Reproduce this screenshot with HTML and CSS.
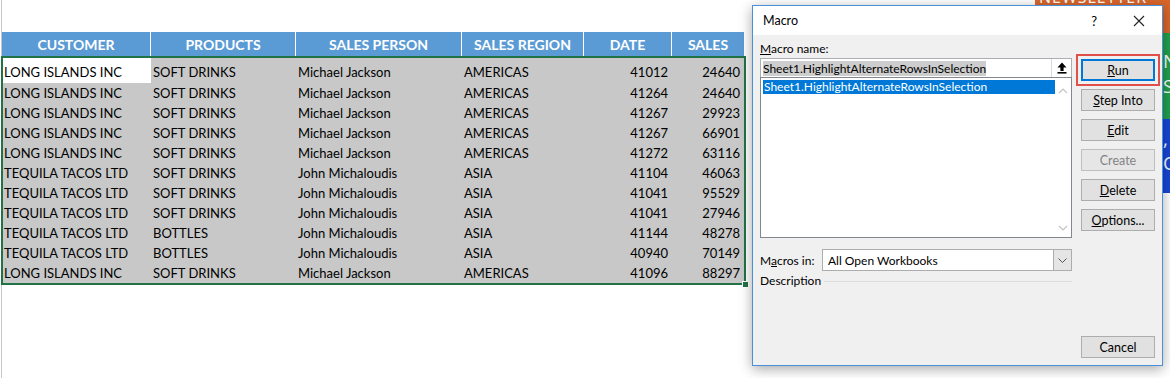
FILE: index.html
```html
<!DOCTYPE html>
<html lang="en">
<head>
    <meta charset="UTF-8">
    <meta name="viewport" content="width=device-width, initial-scale=1.0">
    <title>Macro</title>
    <link rel="stylesheet" href="styles.css">
</head>
<body>
    <!-- sheet -->
    <div class="sheet">
        <div class="head">
            <div>CUSTOMER</div>
            <div>PRODUCTS</div>
            <div>SALES PERSON</div>
            <div>SALES REGION</div>
            <div>DATE</div>
            <div>SALES</div>
        </div>
        <div class="data">
            <div class="row first"><div class="active">LONG ISLANDS INC</div><div>SOFT DRINKS</div><div>Michael Jackson</div><div>AMERICAS</div><div class="num">41012</div><div class="num">24640</div></div>
            <div class="row"><div>LONG ISLANDS INC</div><div>SOFT DRINKS</div><div>Michael Jackson</div><div>AMERICAS</div><div class="num">41264</div><div class="num">24640</div></div>
            <div class="row"><div>LONG ISLANDS INC</div><div>SOFT DRINKS</div><div>Michael Jackson</div><div>AMERICAS</div><div class="num">41267</div><div class="num">29923</div></div>
            <div class="row"><div>LONG ISLANDS INC</div><div>SOFT DRINKS</div><div>Michael Jackson</div><div>AMERICAS</div><div class="num">41267</div><div class="num">66901</div></div>
            <div class="row"><div>LONG ISLANDS INC</div><div>SOFT DRINKS</div><div>Michael Jackson</div><div>AMERICAS</div><div class="num">41272</div><div class="num">63116</div></div>
            <div class="row"><div>TEQUILA TACOS LTD</div><div>SOFT DRINKS</div><div>John Michaloudis</div><div>ASIA</div><div class="num">41104</div><div class="num">46063</div></div>
            <div class="row"><div>TEQUILA TACOS LTD</div><div>SOFT DRINKS</div><div>John Michaloudis</div><div>ASIA</div><div class="num">41041</div><div class="num">95529</div></div>
            <div class="row"><div>TEQUILA TACOS LTD</div><div>SOFT DRINKS</div><div>John Michaloudis</div><div>ASIA</div><div class="num">41041</div><div class="num">27946</div></div>
            <div class="row"><div>TEQUILA TACOS LTD</div><div>BOTTLES</div><div>John Michaloudis</div><div>ASIA</div><div class="num">41144</div><div class="num">48278</div></div>
            <div class="row"><div>TEQUILA TACOS LTD</div><div>BOTTLES</div><div>John Michaloudis</div><div>ASIA</div><div class="num">40940</div><div class="num">70149</div></div>
            <div class="row"><div>LONG ISLANDS INC</div><div>SOFT DRINKS</div><div>Michael Jackson</div><div>AMERICAS</div><div class="num">41096</div><div class="num">88297</div></div>
            <span class="handle"></span>
        </div>
    </div>

    <!-- banner behind the dialog -->
    <div class="banner">
        <div class="orange"><span>NEWSLETTER</span></div>
        <div class="green"><span>N</span><span>SE</span></div>
        <div class="blue"><span>,</span><span>O</span></div>
    </div>

    <!-- macro dialog -->
    <div class="dialog">
        <div class="titlebar">
            <span class="title">Macro</span>
            <span class="help">?</span>
            <svg class="close" width="12" height="12" viewBox="0 0 12 12"><path d="M1 1L11 11M11 1L1 11" stroke="#222" stroke-width="1.1" fill="none"/></svg>
        </div>
        <div class="body">
            <div class="left">
                <div class="label"><u>M</u>acro name:</div>
                <div class="namebox">
                    <span class="seltext">Sheet1.HighlightAlternateRowsInSelection</span>
                    <span class="upbtn">
                        <svg width="10" height="12" viewBox="0 0 10 12"><path d="M5 0.5L9.5 5.5H6.6V9H3.4V5.5H0.5Z" fill="#000"/><rect x="0.5" y="10" width="9" height="1.6" fill="#000"/></svg>
                    </span>
                </div>
                <div class="list">
                    <div class="item">Sheet1.HighlightAlternateRowsInSelection</div>
                    <div class="scroll">
                        <svg width="10" height="6" viewBox="0 0 10 6"><path d="M1 5L5 1L9 5" stroke="#c4c4c4" stroke-width="1.2" fill="none"/></svg>
                        <svg width="10" height="6" viewBox="0 0 10 6"><path d="M1 1L5 5L9 1" stroke="#c4c4c4" stroke-width="1.2" fill="none"/></svg>
                    </div>
                </div>
                <div class="field">
                    <span class="flabel">M<u>a</u>cros in:</span>
                    <div class="select">
                        <span>All Open Workbooks</span>
                        <span class="drop">
                            <svg width="9" height="5" viewBox="0 0 9 5"><path d="M0.5 0.5L4.5 4.5L8.5 0.5" stroke="#555" stroke-width="1" fill="none"/></svg>
                        </span>
                    </div>
                </div>
                <div class="desc">
                    <span>Description</span>
                    <span class="rule"></span>
                </div>
            </div>
            <div class="buttons">
                <button class="btn run"><u>R</u>un</button>
                <button class="btn"><u>S</u>tep Into</button>
                <button class="btn"><u>E</u>dit</button>
                <button class="btn" disabled>Create</button>
                <button class="btn"><u>D</u>elete</button>
                <button class="btn"><u>O</u>ptions...</button>
                <button class="btn cancel">Cancel</button>
            </div>
        </div>
    </div>
</body>
</html>
```

FILE: styles.css
```css
body {
    margin: 0;
    width: 1170px;
    height: 378px;
    overflow: hidden;
    background-color: #fff;
    position: relative;
    font-family: Lato, "Liberation Sans", sans-serif;
}

/* sheet */
.sheet {
    height: 378px;
    padding-top: 32px;
    box-sizing: border-box;
    border-left: 1px solid #c6c6c6;
    margin-left: 1px;
}
.head {
    display: grid;
    grid-template-columns: 149px 145px 166px 122px 88px 72px;
    height: 24px;
}
.head div {
    background-color: #5b9bd5;
    color: #fff;
    font-weight: bold;
    font-size: 14px;
    line-height: 25px;
    text-align: center;
    border-right: 1px solid #fff;
}
.head div:last-child {
    border-right: none;
}
.data {
    position: relative;
    width: 741px;
    margin-left: -1px;
    border: 2px solid #217346;
    background-color: #c8c8c8;
}
.row {
    display: grid;
    grid-template-columns: 148px 145px 166px 122px 88px 72px;
    height: 20px;
    font-size: 13px;
    line-height: 21px;
    color: #000;
}
.row div {
    padding-left: 2px;
    white-space: nowrap;
    overflow: hidden;
}
.row div:first-child {
    padding-left: 1px;
}
.row .num {
    text-align: right;
    padding-right: 4px;
}
.row.first {
    height: 25px;
}
.row.first div {
    padding-top: 4px;
}
.row .active {
    background-color: #fff;
}
.handle {
    position: absolute;
    right: -5px;
    bottom: -5px;
    width: 5px;
    height: 5px;
    background-color: #217346;
    border: 1px solid #fff;
}

/* banner behind dialog */
.banner {
    position: absolute;
    left: 1035px;
    top: 0;
    width: 135px;
    color: #fff;
    font-family: "Open Sans", sans-serif;
    overflow: hidden;
}
.orange {
    height: 33px;
    background-color: #d9662a;
    font-size: 16px;
    line-height: 0;
    padding-left: 4px;
    letter-spacing: 1px;
    overflow: hidden;
}
.orange span {
    display: block;
    margin-top: -3px;
}
.green {
    height: 86px;
    background-color: #23a04c;
    display: flex;
    flex-direction: column;
    padding: 16px 0 0 128px;
    box-sizing: border-box;
    font-size: 19px;
    line-height: 25px;
}
.blue {
    height: 74px;
    background-color: #1846d6;
    display: flex;
    flex-direction: column;
    padding: 8px 0 0 128px;
    box-sizing: border-box;
    font-size: 19px;
    line-height: 24px;
}

/* dialog */
.dialog {
    position: absolute;
    left: 752px;
    top: 5px;
    width: 409px;
    height: 359px;
    border: 1px solid #4a8fd9;
    background-color: #f0f0f0;
    box-shadow: 0 3px 12px rgba(0, 0, 0, 0.35);
    font-family: Lato, "Noto Sans", sans-serif;
    font-size: 12px;
    color: #000;
    display: flex;
    flex-direction: column;
}
.titlebar {
    height: 29px;
    background-color: #fff;
    display: flex;
    align-items: center;
    padding-left: 10px;
}
.title {
    flex: 1;
    font-size: 12.5px;
}
.help {
    font-size: 13px;
    margin-right: 36px;
}
.close {
    margin-right: 17px;
}
.body {
    flex: 1;
    display: flex;
    gap: 9px;
    padding: 6px 7px 7px 7px;
}
.left {
    width: 312px;
    display: flex;
    flex-direction: column;
}
.label {
    height: 17px;
    line-height: 16px;
}
.namebox {
    height: 18px;
    border: 1px solid #abadb3;
    background-color: #fff;
    display: flex;
    align-items: center;
    padding-left: 2px;
}
.seltext {
    background-color: #cdcdcd;
    line-height: 15px;
    margin-right: auto;
}
.upbtn {
    width: 19px;
    height: 18px;
    display: flex;
    align-items: center;
    justify-content: center;
    border-left: 1px solid #dadada;
}
.list {
    height: 157px;
    margin-top: -1px;
    border: 1px solid #828790;
    background-color: #fff;
    display: flex;
    padding: 2px 0 0 2px;
}
.item {
    width: 291px;
    height: 14px;
    line-height: 14px;
    background-color: #0078d7;
    color: #fff;
    padding-left: 1px;
}
.scroll {
    flex: 1;
    display: flex;
    flex-direction: column;
    justify-content: space-between;
    align-items: center;
    padding: 8px 0 6px 0;
}
.field {
    display: flex;
    align-items: center;
    margin-top: 11px;
}
.flabel {
    width: 62px;
}
.select {
    flex: 1;
    height: 20px;
    border: 1px solid #adadad;
    background-color: #fff;
    display: flex;
    align-items: center;
    padding-left: 5px;
}
.select span:first-child {
    flex: 1;
}
.drop {
    width: 17px;
    height: 20px;
    background-color: #e5e5e5;
    border-left: 1px solid #adadad;
    display: flex;
    align-items: center;
    justify-content: center;
}
.desc {
    display: flex;
    align-items: center;
    margin-top: 2px;
    line-height: 16px;
}
.rule {
    flex: 1;
    height: 1px;
    background-color: #dcdcdc;
    margin-left: 3px;
}
.buttons {
    width: 74px;
    display: flex;
    flex-direction: column;
    gap: 8px;
    padding-top: 18px;
}
.btn {
    height: 22px;
    margin: 0;
    padding: 0;
    border: 1px solid #adadad;
    background-color: #e1e1e1;
    font-family: Lato, "Noto Sans", sans-serif;
    font-size: 12.5px;
    color: #000;
}
.btn:disabled {
    color: #838383;
    border-color: #bfbfbf;
    background-color: #e6e6e6;
}
.run {
    border-color: #0078d7;
    box-shadow: inset 0 0 0 1px #0078d7;
    outline: 2px solid #e0504a;
    outline-offset: 3px;
}
.cancel {
    margin-top: auto;
}
```
